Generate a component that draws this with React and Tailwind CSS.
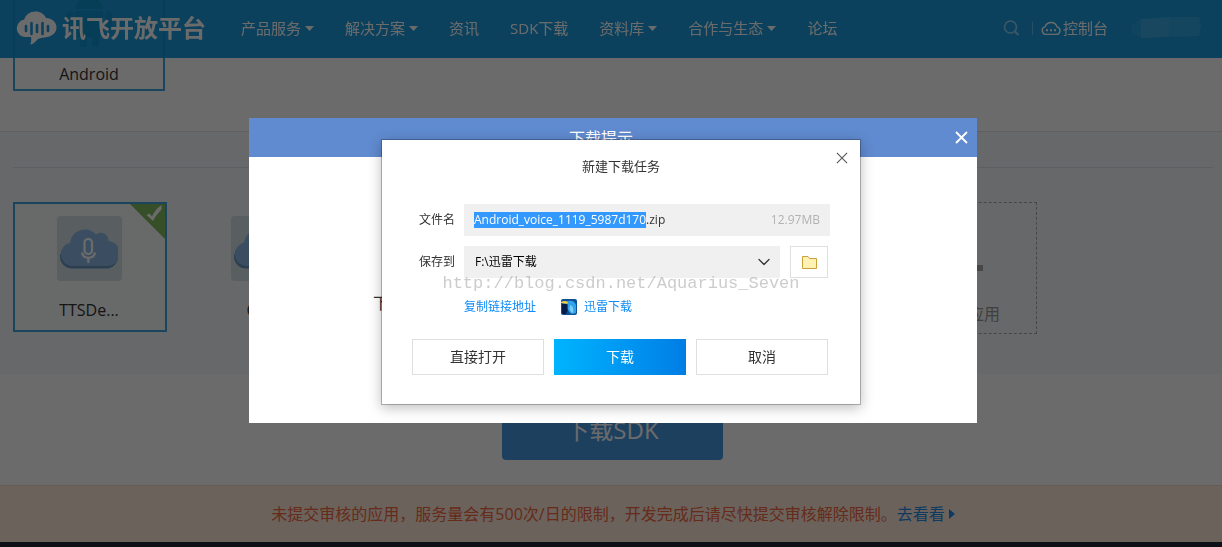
import { useEffect, useRef } from "react";
import { ChevronDown } from "lucide-react";

const NAV_ITEMS = [
  { label: "产品服务", menu: true },
  { label: "解决方案", menu: true },
  { label: "资讯" },
  { label: "SDK下载" },
  { label: "资料库", menu: true },
  { label: "合作与生态", menu: true },
  { label: "论坛" }
];

const FILE_BASE = "Android_voice_1119_5987d170";

export default function App() {
  return (
    <div className="min-h-screen bg-white font-['Open_Sans','Noto_Sans_CJK_SC',sans-serif] text-[#333]">
      <Header />
      <main>
        <section className="flex h-[132px] items-start border-b border-[#dfe3ea] pl-[13px]">
          <div className="flex h-[91px] w-[152px] flex-col items-center justify-between border-2 border-t-0 border-[#3ea4dc] pb-[3px]">
            <AndroidIcon />
            <span className="text-base leading-6">Android</span>
          </div>
        </section>

        <section className="bg-[#f4f7fb] pb-10 pl-[13px] pr-[9px] pt-[35px]">
          <hr className="border-[#dde1e6]" />
          <div className="mt-[34px] grid grid-cols-[repeat(6,154px)] gap-5">
            <DemoCard name="TTSDe..." selected />
            <DemoCard name="CC..." />
            <button
              type="button"
              className="col-start-6 flex h-[132px] flex-col items-center justify-between border border-dashed border-[#aaa] pb-[7px] pt-[42px] text-[#999]"
            >
              <svg width="46" height="46" viewBox="0 0 46 46" fill="#aaa">
                <path d="M20 0h6v20h20v6H26v20h-6V26H0v-6h20z" />
              </svg>
              <span className="text-base leading-6">创建新应用</span>
            </button>
          </div>
        </section>

        <section className="flex justify-center pb-[25px] pl-0.5 pt-7">
          <button type="button" className="h-[58px] w-[221px] rounded-sm bg-[#479ae3] pb-0.5 text-2xl text-white">
            下载SDK
          </button>
        </section>

        <p className="flex h-[57px] items-center justify-center border-t border-[#f0dccb] bg-[#ffe9dc] pl-1 text-base text-[#f2663c]">
          未提交审核的应用，服务量会有500次/日的限制，开发完成后请尽快提交审核解除限制。
          <a href="#review" className="flex items-center gap-1 text-[#1e8ae6]">
            去看看
            <svg width="6" height="10" viewBox="0 0 6 10" fill="currentColor">
              <path d="M0 0l6 5-6 5z" />
            </svg>
          </a>
        </p>
      </main>
      <footer className="h-[5px] bg-[#1f2638]" />

      <div className="fixed inset-0 z-20 bg-black/58" />
      <HintDialog />
      <DownloadDialog />
    </div>
  );
}

function Header() {
  return (
    <header className="fixed inset-x-0 top-0 z-10 flex h-[58px] items-center bg-[#0692dc]/90 pb-0.5 pl-4 pr-[19px] text-[15px] text-white">
      <a href="#home" className="flex items-center gap-1">
        <LogoCloud />
        <span className="text-2xl font-bold">讯飞开放平台</span>
      </a>
      <nav className="ml-[35px] flex items-center gap-[31px]">
        {NAV_ITEMS.map((item) => (
          <a key={item.label} href="#nav" className="flex items-center gap-1 whitespace-nowrap">
            {item.label}
            {item.menu && (
              <svg width="9" height="5" viewBox="0 0 9 5" fill="currentColor">
                <path d="M0 0h9L4.500 5z" />
              </svg>
            )}
          </a>
        ))}
      </nav>
      <div className="ml-auto flex items-center">
        <button type="button" aria-label="搜索" className="mr-3 opacity-50">
          <svg width="17" height="17" viewBox="0 0 17 17" fill="none" stroke="currentColor" strokeWidth="1.600">
            <circle cx="7.500" cy="7" r="6" />
            <path d="M11.500 11l4 4" strokeWidth="2.200" />
          </svg>
        </button>
        <span className="h-[13px] w-px bg-white/30" />
        <a href="#console" className="ml-2 flex items-center gap-0.5">
          <svg width="20" height="15" viewBox="0 0 20 15" fill="none" stroke="currentColor" strokeWidth="1.400">
            <path d="M4.600 13.400h10.500a3.800 3.800 0 0 0 .9-7.500A6.200 6.200 0 0 0 4.200 5.600a4 4 0 0 0 .4 7.800z" />
            <path d="M5 9.300h2M9 9.300h2M13 9.300h2" strokeWidth="2" />
          </svg>
          控制台
        </a>
        <svg className="ml-[21px]" width="74" height="22" viewBox="0 0 74 22" fill="#fff">
          <path d="M2 8L12 2v19L3 16z" opacity="0.04" />
          <path d="M12 2L40 0v20l-8 0-10 1-10 0z" opacity="0.13" />
          <path d="M40 0h30l2 8-2 11-30 1z" opacity="0.09" />
        </svg>
      </div>
    </header>
  );
}

function DemoCard({ name, selected }) {
  return (
    <div
      className={
        selected
          ? "relative flex h-[130px] flex-col items-center justify-between border-2 border-[#3ea4dc] bg-[#f7f9fb] pb-2 pr-0.5 pt-3"
          : "relative flex h-[130px] flex-col items-center justify-between border-2 border-transparent pb-2 pr-0.5 pt-3"
      }
    >
      <span className="flex size-[65px] items-center justify-center rounded bg-[#d3dfe7]">
        <svg width="58" height="40" viewBox="0 0 58 40">
          <path d="M12 39.500A12 12 0 0 1 0 27.500V25h58v3a12 12 0 0 1-12 11.500z" fill="#6a96bf" />
          <path
            d="M12 37A11.800 11.800 0 0 1 10 13.700C11.500 5 18 .5 25 .5c5 0 8.500 2 11 5 5-4 12.500-.5 12.500 6.500A12.500 12.500 0 0 1 46 37z"
            fill="#8dbae6"
          />
          <g fill="none" stroke="#fff" strokeWidth="2.200">
            <rect x="24.500" y="10" width="7.500" height="15" rx="3.750" />
            <path d="M22 23.500c1 7 12 7 13 0M28.300 29v5" />
          </g>
        </svg>
      </span>
      <span className="text-base leading-6">{name}</span>
      {selected && (
        <svg className="absolute right-0 top-0" width="35" height="35" viewBox="0 0 35 35">
          <path d="M0 0h35v35z" fill="#80bd5f" />
          <path d="M16.500 11l3-1.500 2.500 3C24 8 27 4 31.500 1v4.500C28 9 25 13 23 17z" fill="#fff" />
        </svg>
      )}
    </div>
  );
}

function HintDialog() {
  return (
    <div className="fixed inset-0 z-30 flex items-start justify-center pl-1 pt-[118px]">
      <div role="dialog" aria-label="下载提示" className="min-h-[305px] w-[728px] bg-white">
        <div className="flex h-[39px] items-center bg-[#608bd0] pr-2 text-white">
          <h2 className="flex-1 text-center text-base">下载提示</h2>
          <button type="button" aria-label="关闭" className="flex w-4 justify-center">
            <CloseMark size={13} strokeWidth={1.8} />
          </button>
        </div>
        <p className="px-31 pt-[134px] text-base leading-6">下载</p>
      </div>
    </div>
  );
}

function DownloadDialog() {
  const nameRef = useRef(null);

  // preselect the name without its extension
  useEffect(() => {
    nameRef.current.focus();
    nameRef.current.setSelectionRange(0, FILE_BASE.length);
  }, []);

  return (
    <div className="fixed inset-0 z-40 flex items-start justify-center pl-5 pt-[139px]">
      <form
        role="dialog"
        aria-label="新建下载任务"
        className="relative w-[480px] border border-black/25 bg-white bg-clip-padding px-[30px] pb-[29px] pt-3.5 text-xs shadow-[0_3px_12px_rgba(0,0,0,0.25)]"
        onSubmit={(event) => event.preventDefault()}
      >
        <h2 className="text-center text-[13px] leading-6">新建下载任务</h2>
        <button type="button" aria-label="关闭" className="absolute right-3 top-3 text-[#555]">
          <CloseMark size={12} strokeWidth={1.2} />
        </button>

        <div className="mt-[26px] flex items-center pl-[7px]">
          <label htmlFor="file-name" className="w-[45px]">文件名</label>
          <div className="flex h-8 w-[366px] items-center bg-[#f0f0f0] px-2.5">
            <input
              id="file-name"
              ref={nameRef}
              defaultValue={`${FILE_BASE}.zip`}
              spellCheck={false}
              className="min-w-0 flex-1 bg-transparent text-xs outline-none selection:bg-[#3399ff] selection:text-white"
            />
            <span className="text-xs text-[#b2b2b2]">12.97MB</span>
          </div>
        </div>

        <div className="mt-2.5 flex items-center pl-[7px]">
          <label htmlFor="save-to" className="w-[45px]">保存到</label>
          <div className="relative mr-2.5">
            <select
              id="save-to"
              className="h-8 w-[316px] appearance-none bg-[#f0f0f0] px-[11px] text-xs text-black outline-none"
            >
              <option>F:\迅雷下载</option>
            </select>
            <ChevronDown size={20} strokeWidth={1.5} className="pointer-events-none absolute right-1.5 top-1.5" />
          </div>
          <button
            type="button"
            aria-label="选择文件夹"
            className="flex h-8 w-[38px] items-center justify-center border border-[#dfdfdf]"
          >
            <svg width="15" height="13" viewBox="0 0 15 13" fill="#fff0b3" stroke="#c9a13b">
              <path d="M.5.5h5.500l1.500 2h7v10H.5z" />
            </svg>
          </button>
        </div>

        <div className="mt-5 flex h-[18px] items-center pl-[52px] text-[#0f8cf7]">
          <a href="#copy">复制链接地址</a>
          <a href="#thunder" className="ml-[25px] flex items-center gap-[7px]">
            <ThunderIcon />
            迅雷下载
          </a>
        </div>

        <div className="mt-[23px] flex gap-2.5 text-sm">
          <button type="button" className="h-9 w-[132px] border border-[#dfdfdf]">直接打开</button>
          <button type="submit" className="h-9 w-[132px] bg-linear-to-r from-[#00b4ff] to-[#007de5] text-white">
            下载
          </button>
          <button type="button" className="h-9 w-[132px] border border-[#dfdfdf]">取消</button>
        </div>

        <span className="pointer-events-none absolute inset-x-0 top-[132px] whitespace-nowrap text-center font-['Liberation_Mono',monospace] text-[17px] leading-6 text-[#aaa]/60">
          http://blog.csdn.net/Aquarius_Seven
        </span>
      </form>
    </div>
  );
}

function CloseMark({ size, strokeWidth }) {
  return (
    <svg width={size} height={size} viewBox="0 0 13 13" stroke="currentColor" strokeWidth={strokeWidth}>
      <path d="M1 1l11 11M12 1L1 12" />
    </svg>
  );
}

function LogoCloud() {
  return (
    <svg width="42" height="34" viewBox="0 0 42 34">
      <path
        d="M9 26A8.800 8.800 0 0 1 4 10.500c1.200-1 2.500-1.500 4-1.700C10 3.500 14 .5 19.500.5c5 0 8.500 2.500 10.500 6.500 6 .3 10.500 4 10.500 9.500 0 5-4 8.500-9 9.500-4.500 1-8.500.5-11 3.500-1.500 1.500-3.500 3.500-6 4 .8-2.500 1-5 .5-7.500z"
        fill="#fff"
      />
      <path
        d="M10 15v5M15.500 12v11M21 14v7M26.500 12v11M32 15v5"
        stroke="#1d9adb"
        strokeWidth="2.600"
        strokeLinecap="round"
      />
    </svg>
  );
}

function AndroidIcon() {
  return (
    <svg width="48" height="48" viewBox="0 0 48 48" fill="#7fb06f">
      <path d="M10 9a14 12 0 0 1 28 0z" />
      <rect x="10" y="11" width="28" height="26" rx="2" />
      <rect x="1" y="11" width="7" height="19" rx="3.500" />
      <rect x="40" y="11" width="7" height="19" rx="3.500" />
      <path d="M15 34h7v13h-7zM27 34h7v13h-7z" />
    </svg>
  );
}

function ThunderIcon() {
  return (
    <svg width="16" height="16" viewBox="0 0 16 16">
      <rect width="16" height="16" rx="2" fill="#0f4f94" />
      <path d="M1 5h5c1 4 1 7-1 10H2l-1-1z" fill="#071d49" />
      <path d="M5 3C9 .5 14 2 15 6v8l-4 1c-4-2-5-6-4-9z" fill="#2fa4ea" />
      <path d="M9 6c3 1 4 4 3 8-3-1-4-4-3-8z" fill="#79cdf7" />
      <path d="M0 3c2-1.500 5-1.500 7 0L6 5 0 4z" fill="#e8cf4a" />
    </svg>
  );
}
